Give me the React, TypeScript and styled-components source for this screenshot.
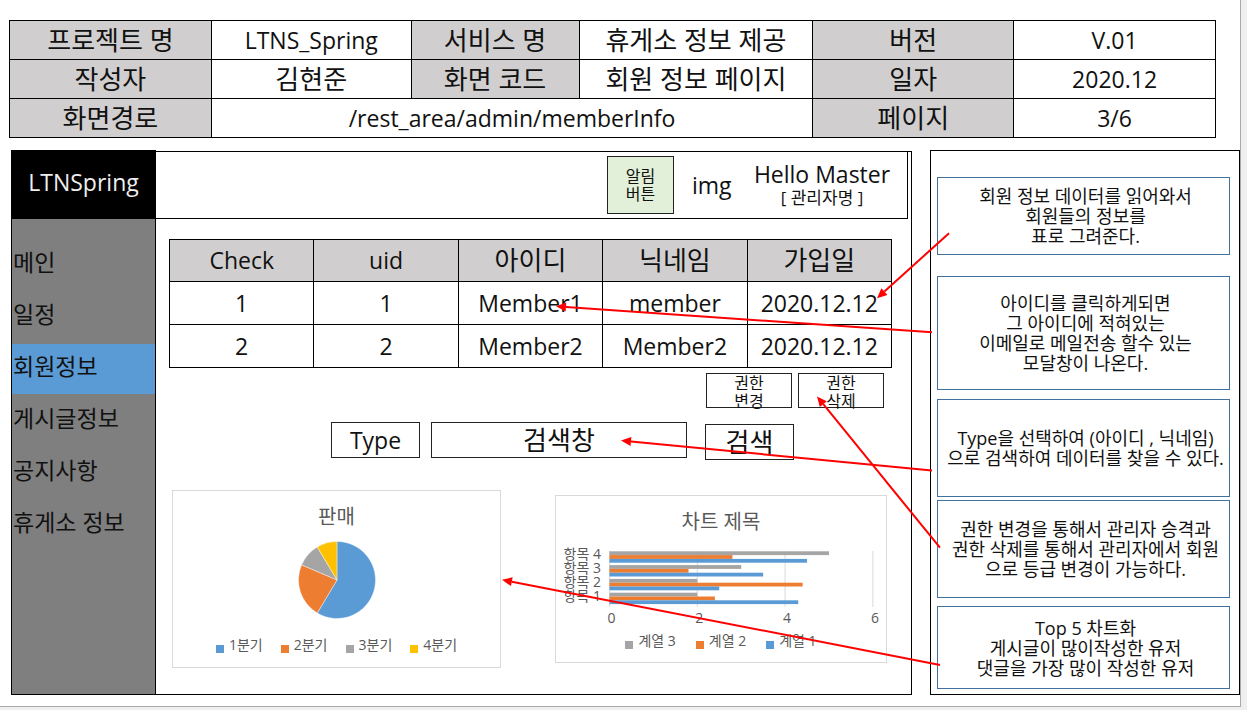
import React from "react";
import styled, { createGlobalStyle } from "styled-components";

const BLUE = "#5b9bd5";
const ORANGE = "#ed7d31";
const GRAY = "#a5a5a5";
const YELLOW = "#ffc000";

const GlobalStyle = createGlobalStyle`
  *, *::before, *::after { box-sizing: border-box; }
  body {
    margin: 0;
    background: #efefef;
    color: #111;
    font-family: "Open Sans", "Noto Sans CJK KR", sans-serif;
  }
  button, input, select { font: inherit; color: inherit; }
`;

const Slide = styled.main`
  margin-right: 6px;
  padding: 20px 0 11px;
  background: #fff;
  border-right: 1px solid #a9a9a9;
  border-bottom: 1px solid #a9a9a9;
`;

const InfoArea = styled.div`
  padding: 0 24px 0 9px;
`;

const GridTable = styled.table`
  width: 100%;
  table-layout: fixed;
  border-collapse: collapse;
  text-align: center;
`;

const Cell = styled.td<{ $shade?: boolean; $latin?: boolean; $height: number }>`
  height: ${(p) => p.$height}px;
  padding: 0 0 1px;
  border: 1px solid #000;
  background: ${(p) => (p.$shade ? "#d0cece" : "#fff")};
  font-size: ${(p) => (p.$latin ? 23 : 26)}px;
  font-weight: 400;
  line-height: 28px;
  white-space: nowrap;
`;

const Workspace = styled.div`
  position: relative;
  display: flex;
  gap: 18px;
  margin: 12px 0 0 11px;
`;

const AppFrame = styled.section`
  flex: 1;
  min-width: 0;
  display: grid;
  grid-template-columns: 145px minmax(0, 1fr);
`;

const Sidebar = styled.aside`
  background: #7f7f7f;
  border: 1px solid #000;
`;

const Brand = styled.div`
  height: 68px;
  padding-bottom: 6px;
  display: flex;
  align-items: center;
  justify-content: center;
  background: #000;
  color: #eee;
  font-size: 23px;
`;

const Nav = styled.nav`
  display: flex;
  flex-direction: column;
  gap: 2px;
  margin-top: 21px;
`;

const NavLink = styled.a<{ $active?: boolean }>`
  display: flex;
  align-items: center;
  height: 50px;
  padding: 0 0 9px 1px;
  background: ${(p) => (p.$active ? BLUE : "transparent")};
  color: #111;
  font-size: 23px;
  text-decoration: none;
  white-space: nowrap;
`;

const Content = styled.div`
  margin-top: 1px;
  border: 1px solid #000;
  border-left: 0;
`;

const TopBar = styled.header`
  display: flex;
  justify-content: flex-end;
  align-items: center;
  gap: 18px;
  height: 67px;
  margin-right: 3px;
  padding-right: 15px;
  border: 1px solid #000;
  border-width: 0 1px 1px 0;
`;

const AlertButton = styled.button`
  width: 67px;
  height: 58px;
  padding: 0;
  border: 1px solid #222;
  background: #e2f0d9;
  font-size: 16px;
  line-height: 18px;
`;

const Avatar = styled.span`
  width: 42px;
  font-size: 23px;
  line-height: 28px;
`;

const Profile = styled.div`
  width: 140px;
  text-align: center;
  white-space: nowrap;
`;

const Greeting = styled.div`
  font-size: 23px;
  line-height: 26px;
`;

const Role = styled.div`
  font-size: 17px;
  line-height: 22px;
`;

const Body = styled.div`
  padding: 20px 19px 26px 13px;
`;

const Permissions = styled.div`
  display: flex;
  justify-content: flex-end;
  gap: 6px;
  margin-top: 5px;
  padding-right: 8px;
`;

const PermissionButton = styled.button`
  width: 86px;
  height: 35px;
  padding: 0;
  border: 1px solid #222;
  background: #fff;
  font-size: 16px;
  line-height: 18px;
`;

const SearchForm = styled.form`
  display: flex;
  align-items: flex-start;
  margin-top: 14px;
  padding: 0 98px 0 162px;
`;

const TypeSelect = styled.select`
  appearance: none;
  width: 89px;
  height: 36px;
  padding: 0;
  border: 1px solid #222;
  border-radius: 0;
  background: #fff;
  font-size: 23px;
  text-align: center;
  text-align-last: center;
`;

const SearchInput = styled.input`
  flex: 1;
  min-width: 0;
  height: 36px;
  margin: 0 18px 0 11px;
  padding: 0;
  border: 1px solid #222;
  background: #fff;
  font-size: 26px;
  line-height: 32px;
  text-align: center;
  &::placeholder { color: #111; opacity: 1; }
`;

const SearchButton = styled.button`
  width: 89px;
  height: 36px;
  margin-top: 2px;
  padding: 0;
  border: 1px solid #222;
  background: #fff;
  font-size: 26px;
  line-height: 32px;
`;

const Charts = styled.div`
  display: flex;
  align-items: center;
  gap: 54px;
  margin-top: 30px;
  padding: 0 5px 0 3px;
`;

const ChartCard = styled.figure<{ $height: number; $grow: number }>`
  flex: ${(p) => p.$grow} 1 0;
  min-width: 0;
  min-height: ${(p) => p.$height}px;
  margin: 0;
  padding-top: 14px;
  border: 1px solid #d9d9d9;
  color: #595959;
  text-align: center;
`;

const ChartTitle = styled.figcaption`
  font-size: 20px;
  line-height: 24px;
`;

const PieSvg = styled.svg`
  display: block;
  width: 78px;
  height: 78px;
  margin: 12px auto 16px;
`;

const BarSvg = styled.svg`
  display: block;
  width: 100%;
  height: 82px;
  margin: 10px 0 5px;
  font-size: 14px;
  fill: #595959;
`;

const Legend = styled.ul<{ $gap: number }>`
  display: flex;
  justify-content: center;
  gap: ${(p) => p.$gap}px;
  margin: 0;
  padding: 0;
  list-style: none;
  font-size: 14px;
  line-height: 20px;
`;

const LegendItem = styled.li<{ $color: string }>`
  display: flex;
  align-items: flex-end;
  gap: 5px;
  white-space: nowrap;
  &::before {
    content: "";
    width: 8px;
    height: 8px;
    margin-bottom: 2px;
    background: ${(p) => p.$color};
  }
`;

const NotesPanel = styled.aside`
  width: 310px;
  padding: 26px 9px 5px 6px;
  border: 1px solid #000;
`;

const Note = styled.p<{ $height: number; $gap: number }>`
  display: flex;
  flex-direction: column;
  align-items: center;
  justify-content: center;
  min-height: ${(p) => p.$height}px;
  margin: 0 0 ${(p) => p.$gap}px;
  padding-left: 4px;
  border: 1px solid #41719c;
  font-size: 18px;
  line-height: 20px;
  white-space: nowrap;
`;

const ArrowLayer = styled.svg`
  position: absolute;
  inset: 0;
  width: 100%;
  height: 100%;
  pointer-events: none;
`;

const infoColumns = [202, 200, 168, 234, 201, 202];

const navItems = ["메인", "일정", "회원정보", "게시글정보", "공지사항", "휴게소 정보"];

const members = [
  ["1", "1", "Member1", "member", "2020.12.12"],
  ["2", "2", "Member2", "Member2", "2020.12.12"],
];

const quarters = [
  { name: "1분기", value: 8.2, color: BLUE },
  { name: "2분기", value: 3.2, color: ORANGE },
  { name: "3분기", value: 1.4, color: GRAY },
  { name: "4분기", value: 1.2, color: YELLOW },
];

const series = [
  { name: "계열 3", color: GRAY },
  { name: "계열 2", color: ORANGE },
  { name: "계열 1", color: BLUE },
];

const categories = [
  { name: "항목 4", values: [5, 2.8, 4.5] },
  { name: "항목 3", values: [3, 1.8, 3.5] },
  { name: "항목 2", values: [2, 4.4, 2.5] },
  { name: "항목 1", values: [2, 2.4, 4.3] },
];

const notes = [
  { height: 78, gap: 21, lines: ["회원 정보 데이터를 읽어와서", "회원들의 정보를", "표로 그려준다."] },
  {
    height: 114,
    gap: 9,
    lines: ["아이디를 클릭하게되면", "그 아이디에 적혀있는", "이메일로 메일전송 할수 있는", "모달창이 나온다."],
  },
  { height: 98, gap: 3, lines: ["Type을 선택하여 (아이디 , 닉네임)", "으로 검색하여 데이터를 찾을 수 있다."] },
  {
    height: 98,
    gap: 8,
    lines: ["권한 변경을 통해서 관리자 승격과", "권한 삭제를 통해서 관리자에서 회원", "으로 등급 변경이 가능하다."],
  },
  { height: 83, gap: 0, lines: ["Top 5 차트화", "게시글이 많이작성한 유저", "댓글을 가장 많이 작성한 유저"] },
];

const arrows = [
  { from: [938, 83], to: [866, 148] },
  { from: [921, 182], to: [545, 156] },
  { from: [921, 320], to: [610, 290] },
  { from: [929, 397], to: [806, 246] },
  { from: [929, 514], to: [491, 429] },
];

function PieChart() {
  const total = quarters.reduce((sum, q) => sum + q.value, 0);
  const point = (share: number) => {
    const a = share * 2 * Math.PI;
    return `${39 + 38.5 * Math.sin(a)} ${39 - 38.5 * Math.cos(a)}`;
  };
  let start = 0;
  return (
    <PieSvg viewBox="0 0 78 78" role="img" aria-label="판매">
      {quarters.map((q) => {
        const share = q.value / total;
        const end = start + share;
        const d = `M39 39L${point(start)}A38.5 38.5 0 ${share > 0.5 ? 1 : 0} 1 ${point(end)}Z`;
        start = end;
        return <path key={q.name} d={d} fill={q.color} stroke="#fff" strokeWidth="0.4" />;
      })}
    </PieSvg>
  );
}

function BarChart() {
  const left = 53.5;
  const unit = 43.9;
  return (
    <BarSvg viewBox="0 0 330 82" role="img" aria-label="차트 제목">
      {[0, 2, 4, 6].map((n) => (
        <g key={n}>
          <line x1={left + n * unit} x2={left + n * unit} y1="7" y2="63" stroke="#d9d9d9" />
          <text x={left + n * unit + 2} y="79" textAnchor="middle">
            {n}
          </text>
        </g>
      ))}
      {categories.map((c, row) => (
        <g key={c.name}>
          <text x="45" y={15 + row * 14} textAnchor="end">
            {c.name}
          </text>
          {c.values.map((v, i) => (
            <rect
              key={i}
              x={left}
              y={7.3 + row * 13.8 + i * 3.8}
              width={v * unit}
              height="3.8"
              fill={series[i].color}
            />
          ))}
        </g>
      ))}
    </BarSvg>
  );
}

function Arrows() {
  return (
    <ArrowLayer viewBox="0 0 1229 544" preserveAspectRatio="none" aria-hidden="true">
      {arrows.map(({ from, to }, i) => {
        const length = Math.hypot(to[0] - from[0], to[1] - from[1]);
        const ux = (to[0] - from[0]) / length;
        const uy = (to[1] - from[1]) / length;
        const bx = to[0] - ux * 10;
        const by = to[1] - uy * 10;
        return (
          <g key={i} fill="#f00">
            <line x1={from[0]} y1={from[1]} x2={bx} y2={by} stroke="#f00" strokeWidth="2" />
            <polygon
              points={`${to[0]},${to[1]} ${bx - uy * 4.5},${by + ux * 4.5} ${bx + uy * 4.5},${by - ux * 4.5}`}
            />
          </g>
        );
      })}
    </ArrowLayer>
  );
}

function InfoTable() {
  return (
    <GridTable>
      <colgroup>
        {infoColumns.map((w, i) => (
          <col key={i} style={{ width: `${(w / 1207) * 100}%` }} />
        ))}
      </colgroup>
      <tbody>
        <tr>
          <Cell as="th" $shade $height={39}>프로젝트 명</Cell>
          <Cell $latin $height={39}>LTNS_Spring</Cell>
          <Cell as="th" $shade $height={39}>서비스 명</Cell>
          <Cell $height={39}>휴게소 정보 제공</Cell>
          <Cell as="th" $shade $height={39}>버전</Cell>
          <Cell $latin $height={39}>V.01</Cell>
        </tr>
        <tr>
          <Cell as="th" $shade $height={39}>작성자</Cell>
          <Cell $height={39}>김현준</Cell>
          <Cell as="th" $shade $height={39}>화면 코드</Cell>
          <Cell $height={39}>회원 정보 페이지</Cell>
          <Cell as="th" $shade $height={39}>일자</Cell>
          <Cell $latin $height={39}>2020.12</Cell>
        </tr>
        <tr>
          <Cell as="th" $shade $height={39}>화면경로</Cell>
          <Cell $latin colSpan={3} $height={39}>/rest_area/admin/memberInfo</Cell>
          <Cell as="th" $shade $height={39}>페이지</Cell>
          <Cell $latin $height={39}>3/6</Cell>
        </tr>
      </tbody>
    </GridTable>
  );
}

function MemberTable() {
  return (
    <GridTable>
      <thead>
        <tr>
          <Cell as="th" $shade $latin $height={42}>Check</Cell>
          <Cell as="th" $shade $latin $height={42}>uid</Cell>
          <Cell as="th" $shade $height={42}>아이디</Cell>
          <Cell as="th" $shade $height={42}>닉네임</Cell>
          <Cell as="th" $shade $height={42}>가입일</Cell>
        </tr>
      </thead>
      <tbody>
        {members.map((row) => (
          <tr key={row[0]}>
            {row.map((value, i) => (
              <Cell key={i} $latin $height={43}>{value}</Cell>
            ))}
          </tr>
        ))}
      </tbody>
    </GridTable>
  );
}

export default function App() {
  return (
    <>
      <GlobalStyle />
      <Slide>
        <InfoArea>
          <InfoTable />
        </InfoArea>
        <Workspace>
          <AppFrame>
            <Sidebar>
              <Brand>LTNSpring</Brand>
              <Nav>
                {navItems.map((item) => (
                  <NavLink key={item} href="#" $active={item === "회원정보"}>
                    {item}
                  </NavLink>
                ))}
              </Nav>
            </Sidebar>
            <Content>
              <TopBar>
                <AlertButton type="button">
                  알림
                  <br />
                  버튼
                </AlertButton>
                <Avatar>img</Avatar>
                <Profile>
                  <Greeting>Hello Master</Greeting>
                  <Role>[ 관리자명 ]</Role>
                </Profile>
              </TopBar>
              <Body>
                <MemberTable />
                <Permissions>
                  <PermissionButton type="button">
                    권한
                    <br />
                    변경
                  </PermissionButton>
                  <PermissionButton type="button">
                    권한
                    <br />
                    삭제
                  </PermissionButton>
                </Permissions>
                <SearchForm onSubmit={(e) => e.preventDefault()}>
                  <TypeSelect aria-label="Type">
                    <option>Type</option>
                  </TypeSelect>
                  <SearchInput type="text" aria-label="검색창" placeholder="검색창" />
                  <SearchButton type="submit">검색</SearchButton>
                </SearchForm>
                <Charts>
                  <ChartCard $height={178} $grow={329}>
                    <ChartTitle>판매</ChartTitle>
                    <PieChart />
                    <Legend $gap={18}>
                      {quarters.map((q) => (
                        <LegendItem key={q.name} $color={q.color}>{q.name}</LegendItem>
                      ))}
                    </Legend>
                  </ChartCard>
                  <ChartCard $height={168} $grow={332}>
                    <ChartTitle>차트 제목</ChartTitle>
                    <BarChart />
                    <Legend $gap={20}>
                      {series.map((s) => (
                        <LegendItem key={s.name} $color={s.color}>{s.name}</LegendItem>
                      ))}
                    </Legend>
                  </ChartCard>
                </Charts>
              </Body>
            </Content>
          </AppFrame>
          <NotesPanel>
            {notes.map((note) => (
              <Note key={note.lines[0]} $height={note.height} $gap={note.gap}>
                {note.lines.map((line) => (
                  <span key={line}>{line}</span>
                ))}
              </Note>
            ))}
          </NotesPanel>
          <Arrows />
        </Workspace>
      </Slide>
    </>
  );
}
